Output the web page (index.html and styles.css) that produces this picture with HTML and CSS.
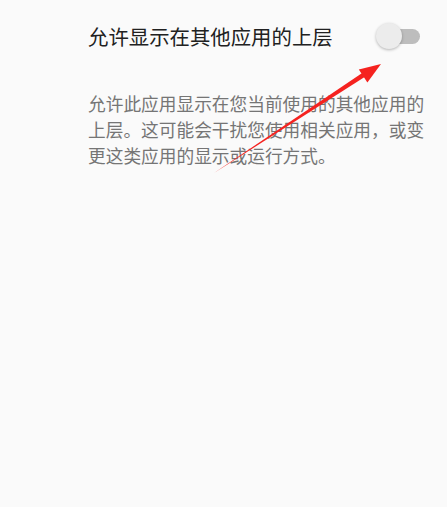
FILE: index.html
```html
<!DOCTYPE html>
<html lang="zh-CN">
<head>
<meta charset="utf-8">
<title>允许显示在其他应用的上层</title>
<link rel="stylesheet" href="styles.css">
</head>
<body>
<div class="screen">
  <div class="pref">
    <div class="pref-row">
      <span class="title">允许显示在其他应用的上层</span>
      <span class="switch"><span class="track"></span><span class="thumb"></span></span>
    </div>
    <p class="summary">允许此应用显示在您当前使用的其他应用的上层。这可能会干扰您使用相关应用，或变更这类应用的显示或运行方式。</p>
  </div>
  <svg class="annot" width="447" height="507" viewBox="0 0 447 507" aria-hidden="true">
    <polygon points="214,173 364.4,71.6 367,75.6" fill="#f5221f"/>
    <polygon points="381,64 358.8,69.6 367.4,82.6" fill="#f5221f"/>
  </svg>
</div>
</body>
</html>
```
FILE: styles.css
```css
html, body {
  margin: 0;
  padding: 0;
  background: #fafafa;
}
.screen {
  position: relative;
  width: 447px;
  height: 507px;
  background: #fafafa;
  font-family: "Noto Sans CJK SC", "Noto Sans", sans-serif;
  overflow: hidden;
}
.pref {
  padding: 22px 16px 0 88px;
}
.pref-row {
  display: flex;
  align-items: center;
  justify-content: space-between;
}
.title {
  font-size: 20.4px;
  line-height: 28px;
  color: #212121;
}
.switch {
  position: relative;
  width: 44px;
  height: 26px;
  margin-right: 11px;
}
.track {
  position: absolute;
  left: 2px;
  top: 6px;
  width: 42px;
  height: 15px;
  border-radius: 8px;
  background: #bdbdbd;
}
.thumb {
  position: absolute;
  left: 0;
  top: 0;
  width: 26px;
  height: 26px;
  border-radius: 50%;
  background: #ececec;
  box-shadow: 0 1px 3px rgba(0, 0, 0, 0.28);
}
.summary {
  margin: 40px 0 0;
  font-size: 17.7px;
  line-height: 26px;
  color: #757575;
}
.annot {
  position: absolute;
  left: 0;
  top: 0;
  pointer-events: none;
}
```
